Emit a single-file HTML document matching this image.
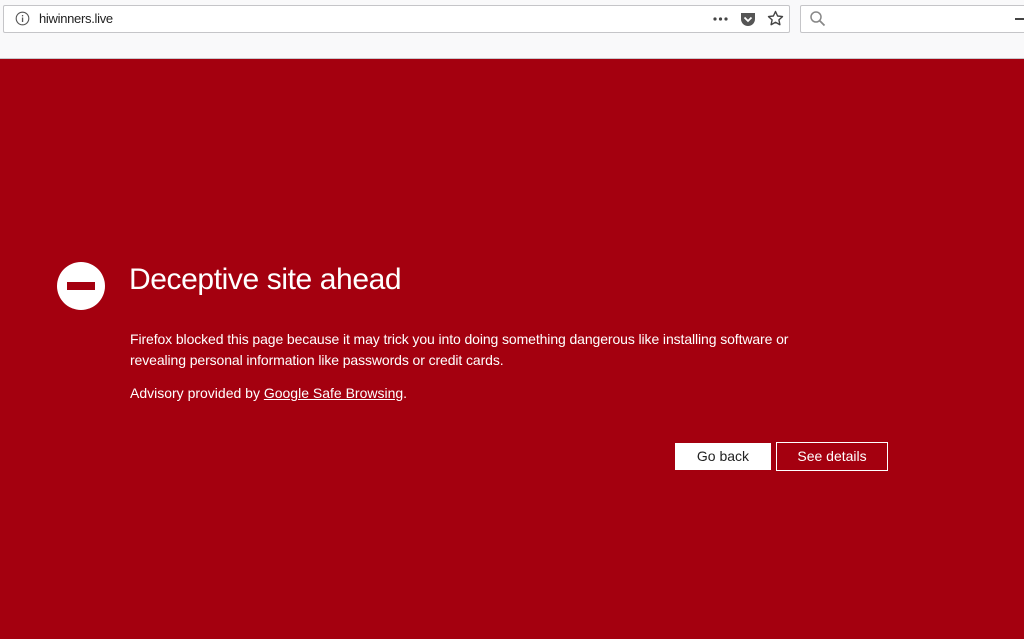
<!DOCTYPE html>
<html><head><style>
body{margin:0;width:1024px;height:639px;overflow:hidden;font-family:"Liberation Sans",sans-serif;background:#a4000f;position:relative}
.tb{position:absolute;left:0;top:0;width:1024px;height:58px;background:#f9f9fa;border-bottom:1px solid #c8c8cc}
.url{position:absolute;left:3px;top:5px;width:785px;height:26px;background:#fff;border:1px solid #c5c5c8;border-radius:2px}
.srch{position:absolute;left:800px;top:5px;width:230px;height:26px;background:#fff;border:1px solid #c5c5c8;border-radius:2px}
.t{position:absolute;color:#fff}
.btn{position:absolute;height:27px;line-height:27px;text-align:center;font-size:14px}
</style></head><body>
<div class="tb">
<div class="url">
<svg style="position:absolute;left:11px;top:5px" width="15" height="15"><circle cx="7.5" cy="7.5" r="6.3" fill="none" stroke="#555" stroke-width="1.1"/><rect x="6.9" y="6.5" width="1.3" height="4.5" fill="#555"/><rect x="6.9" y="4" width="1.3" height="1.4" fill="#555"/></svg>
<span style="position:absolute;left:35px;top:5px;font-size:13px;color:#222;letter-spacing:-0.3px">hiwinners.live</span>
<svg style="position:absolute;left:709px;top:11px" width="16" height="4"><circle cx="2" cy="2" r="1.6" fill="#444"/><circle cx="7.5" cy="2" r="1.6" fill="#444"/><circle cx="13" cy="2" r="1.6" fill="#444"/></svg>
<svg style="position:absolute;left:736px;top:5px" width="16" height="16"><path d="M1 2h14v6a7 7 0 0 1-14 0z" fill="#555"/><path d="M4.5 6.5l3.5 3.5 3.5-3.5" fill="none" stroke="#fff" stroke-width="1.8"/></svg>
<svg style="position:absolute;left:763px;top:4px" width="17" height="17"><path d="M8.5 1.5l2.1 4.5 4.9.6-3.6 3.3 1 4.8-4.4-2.4-4.4 2.4 1-4.8-3.6-3.3 4.9-.6z" fill="none" stroke="#444" stroke-width="1.4" stroke-linejoin="round"/></svg>
</div>
<div class="srch"><svg style="position:absolute;left:8px;top:4px" width="18" height="18"><circle cx="7" cy="7" r="5" fill="none" stroke="#888" stroke-width="1.5"/><path d="M10.5 10.5l5 5" stroke="#888" stroke-width="1.8"/></svg><div style="position:absolute;left:214px;top:12px;width:10px;height:1.5px;background:#444"></div></div>
</div>
<svg style="position:absolute;left:57px;top:262px" width="48" height="48"><circle cx="24" cy="24" r="24" fill="#fff"/><rect x="10" y="20" width="28" height="8" fill="#a4000f"/></svg>
<div class="t" style="left:129px;top:263px;font-size:30px;letter-spacing:-0.4px">Deceptive site ahead</div>
<div class="t" style="left:130px;top:329px;font-size:14px;line-height:21px;width:705px;letter-spacing:-0.1px">Firefox blocked this page because it may trick you into doing something dangerous like installing software or revealing personal information like passwords or credit cards.</div>
<div class="t" style="left:130px;top:385px;font-size:14px">Advisory provided by <u>Google Safe Browsing</u>.</div>
<div class="btn" style="left:675px;top:443px;width:96px;background:#fff;color:#222">Go back</div>
<div class="btn" style="left:776px;top:442px;width:110px;border:1px solid #fff;color:#fff">See details</div>
</body></html>
